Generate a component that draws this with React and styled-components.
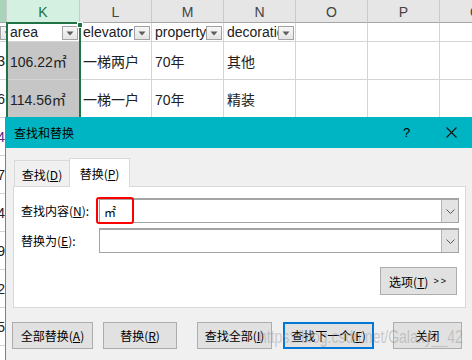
import React from "react";
import styled, { createGlobalStyle } from "styled-components";

const GlobalStyle = createGlobalStyle`
  html, body { margin: 0; padding: 0; background: #fff; }
  body { width: 472px; height: 360px; overflow: hidden; }
  * { box-sizing: border-box; }
`;

const Page = styled.div`
  position: relative;
  width: 472px;
  height: 360px;
  overflow: hidden;
  background: #fff;
  font-family: "Liberation Sans", "Noto Sans CJK SC", sans-serif;
`;

/* ---------------- spreadsheet ---------------- */
const Sheet = styled.div`
  position: relative;
  display: grid;
  grid-template-columns: 7px 73px 72px 72px 72px 72px 72px 72px;
  grid-template-rows: 23px 19px repeat(9, 38px);
  width: 512px;
`;

const HeadCell = styled.div`
  display: flex;
  align-items: center;
  justify-content: center;
  background: ${(p) => (p.$sel ? "#d3f0e0" : p.$partial ? "#a8d5b9" : "#e6e6e6")};
  color: ${(p) => (p.$sel ? "#217346" : "#444")};
  border-right: 1px solid #cacaca;
  border-bottom: 1px solid #a6a6a6;
  font-size: 14px;
  padding-top: 1px;
  overflow: hidden;
`;

const Cell = styled.div`
  position: relative;
  display: flex;
  align-items: ${(p) => (p.$top ? "flex-end" : "center")};
  justify-content: ${(p) => (p.$right ? "flex-end" : "flex-start")};
  padding: ${(p) => (p.$right ? "0 1px 0 0" : "0 0 0 3px")};
  background: ${(p) => (p.$sel ? "#c6c6c6" : "transparent")};
  border-right: 1px solid #d4d4d4;
  border-bottom: 1px solid #d4d4d4;
  font-size: 14px;
  color: ${(p) => p.$color || "#222"};
  white-space: nowrap;
  overflow: ${(p) => (p.$spill ? "visible" : "hidden")};
  padding-bottom: ${(p) => (p.$top ? "1px" : "0")};
`;

const FilterBtn = styled.div`
  position: absolute;
  right: ${(p) => p.$r ?? 1}px;
  bottom: 1px;
  width: 16px;
  height: 14px;
  background: linear-gradient(#f7f7f7, #e4e4e4);
  border: 1px solid #a3a3a3;
  display: flex;
  align-items: center;
  justify-content: center;
`;

const Selection = styled.div`
  position: absolute;
  left: 6px;
  top: 22px;
  width: 75px;
  height: 400px;
  border: 2px solid #217346;
  border-bottom: none;
  pointer-events: none;
`;

const Handle = styled.div`
  position: absolute;
  right: -4px;
  top: -2px;
  width: 6px;
  height: 6px;
  background: #217346;
  border: 1px solid #fff;
`;

const Tri = () => (
  <svg width="8" height="5" viewBox="0 0 8 5">
    <path d="M0.5 0.5 L7.5 0.5 L4 4.5 Z" fill="#5c5c5c" />
  </svg>
);

/* ---------------- dialog ---------------- */
const Dialog = styled.div`
  position: absolute;
  left: 5px;
  top: 117px;
  width: 469px;
  height: 260px;
  background: #f0f0f0;
  border-left: 1px solid #00b4c2;
  font-family: "Noto Sans CJK SC", "Liberation Sans", sans-serif;
  font-size: 12px;
  color: #000;
  display: flex;
  flex-direction: column;
`;

const TitleBar = styled.div`
  height: 31px;
  flex: none;
  background: #00b5c3;
  display: flex;
  align-items: center;
  padding-left: 8px;
`;

const Title = styled.div`
  flex: 1;
  font-size: 12px;
  color: #000;
`;

const TitleBtn = styled.div`
  width: ${(p) => p.$w}px;
  height: 31px;
  display: flex;
  align-items: center;
  justify-content: center;
  font-family: "Liberation Sans", sans-serif;
  font-size: 13px;
  color: #000;
`;

const Body = styled.div`
  padding: 10px 0 0 6px;
  display: flex;
  flex-direction: column;
`;

const TabRow = styled.div`
  display: flex;
  align-items: flex-end;
  height: 29px;
  margin: 0 0 -1px 2px;
  position: relative;
  z-index: 1;
`;

const Tab = styled.div`
  width: ${(p) => p.$w}px;
  height: ${(p) => (p.$active ? 29 : 27)}px;
  margin-left: ${(p) => (p.$active ? -1 : 0)}px;
  background: ${(p) => (p.$active ? "#fff" : "#f0f0f0")};
  border: 1px solid #d9d9d9;
  border-bottom: ${(p) => (p.$active ? "none" : "1px solid #d9d9d9")};
  display: flex;
  align-items: center;
  justify-content: center;
  padding-top: ${(p) => (p.$active ? 0 : 1)}px;
  font-size: 12px;
  white-space: nowrap;
`;

const Panel = styled.div`
  margin-left: 1px;
  width: 453px;
  height: 122px;
  background: #fff;
  border: 1px solid #d9d9d9;
  padding: 11px 0 0 7px;
  display: flex;
  flex-direction: column;
`;

const FieldRow = styled.div`
  display: flex;
  align-items: center;
  height: 25px;
  margin-top: ${(p) => p.$mt || 0}px;
`;

const Label = styled.div`
  width: 78px;
  font-size: 12px;
  white-space: nowrap;
`;

const Combo = styled.div`
  position: relative;
  width: 360px;
  height: 25px;
  border: 1px solid #a3a3a3;
  border-top-width: 2px;
  background: #fff;
  display: flex;
  align-items: center;
`;

const ComboText = styled.div`
  flex: 1;
  padding-left: 4px;
  font-size: 12px;
`;

const ComboArrow = styled.div`
  width: 17px;
  height: 100%;
  background: #e3e3e3;
  border-left: 1px solid #b4b4b4;
  display: flex;
  align-items: center;
  justify-content: center;
`;

const Highlight = styled.div`
  position: absolute;
  left: -4px;
  top: -3px;
  width: 38px;
  height: 27px;
  border: 2px solid #ff0000;
  border-radius: 3px;
  pointer-events: none;
`;

const OptionsRow = styled.div`
  display: flex;
  justify-content: flex-end;
  padding-right: 8px;
  margin-top: 14px;
`;

const Button = styled.div`
  width: ${(p) => p.$w}px;
  height: ${(p) => p.$h || 27}px;
  margin-left: ${(p) => p.$ml || 0}px;
  background: #e1e1e1;
  border: ${(p) => (p.$default ? "2px solid #0078d7" : "1px solid #adadad")};
  display: flex;
  align-items: center;
  justify-content: center;
  font-size: 12px;
  white-space: nowrap;
`;

const Arrows = styled.span`
  font-family: "Liberation Sans", sans-serif;
  font-size: 9px;
  margin-left: 5px;
  letter-spacing: 2px;
`;

const ButtonRow = styled.div`
  display: flex;
  margin-top: 14px;
`;

const Watermark = styled.div`
  position: absolute;
  left: 259px;
  top: 327px;
  font-family: "Liberation Sans", sans-serif;
  font-size: 14px;
  line-height: 20px;
  transform: scaleY(1.25);
  transform-origin: left center;
  color: rgba(140, 140, 140, 0.4);
  white-space: nowrap;
  pointer-events: none;
`;

const Chevron = () => (
  <svg width="9" height="5" viewBox="0 0 9 5">
    <path d="M0.5 0.5 L4.5 4.5 L8.5 0.5" fill="none" stroke="#555" strokeWidth="1" />
  </svg>
);

const CloseIcon = () => (
  <svg width="11" height="11" viewBox="0 0 11 11">
    <path d="M0.5 0.5 L10.5 10.5 M10.5 0.5 L0.5 10.5" stroke="#111" strokeWidth="1.1" />
  </svg>
);

const cols = ["K", "L", "M", "N", "O", "P", "Q"];
const dataRows = [
  ["3", "106.22㎡", "一梯两户", "70年", "其他"],
  ["6", "114.56㎡", "一梯一户", "70年", "精装"],
  ["4"], ["7"], ["4"], ["9"], ["2"], ["5"], ["1"],
];

export default function App() {
  return (
    <Page>
      <GlobalStyle />
      <Sheet>
        <HeadCell $partial />
        {cols.map((c) => (
          <HeadCell key={c} $sel={c === "K"}>{c}</HeadCell>
        ))}

        <Cell $top><FilterBtn $r={-10}><Tri /></FilterBtn></Cell>
        <Cell $top>area<FilterBtn><Tri /></FilterBtn></Cell>
        <Cell $top>elevator<FilterBtn><Tri /></FilterBtn></Cell>
        <Cell $top>property<FilterBtn><Tri /></FilterBtn></Cell>
        <Cell $top $spill>decoration<FilterBtn><Tri /></FilterBtn></Cell>
        <Cell $top />
        <Cell $top />
        <Cell $top />

        {dataRows.map((r, i) => (
          <React.Fragment key={i}>
            <Cell $right $color={i === 2 ? "#5b2a86" : "#222"}>{r[0]}</Cell>
            <Cell $sel>{r[1] || ""}</Cell>
            <Cell>{r[2] || ""}</Cell>
            <Cell>{r[3] || ""}</Cell>
            <Cell>{r[4] || ""}</Cell>
            <Cell />
            <Cell />
            <Cell />
          </React.Fragment>
        ))}

        <Selection><Handle /></Selection>
      </Sheet>

      <Dialog>
        <TitleBar>
          <Title>查找和替换</Title>
          <TitleBtn $w={43}>?</TitleBtn>
          <TitleBtn $w={46}><CloseIcon /></TitleBtn>
        </TitleBar>
        <Body>
          <TabRow>
            <Tab $w={56}>查找(<u>D</u>)</Tab>
            <Tab $w={61} $active>替换(<u>P</u>)</Tab>
          </TabRow>
          <Panel>
            <FieldRow>
              <Label>查找内容(<u>N</u>):</Label>
              <Combo>
                <ComboText>㎡</ComboText>
                <ComboArrow><Chevron /></ComboArrow>
                <Highlight />
              </Combo>
            </FieldRow>
            <FieldRow $mt={5}>
              <Label>替换为(<u>E</u>):</Label>
              <Combo>
                <ComboText />
                <ComboArrow><Chevron /></ComboArrow>
              </Combo>
            </FieldRow>
            <OptionsRow>
              <Button $w={77} $h={28}>选项(<u>T</u>)<Arrows>&gt;&gt;</Arrows></Button>
            </OptionsRow>
          </Panel>
          <ButtonRow>
            <Button $w={81}>全部替换(<u>A</u>)</Button>
            <Button $w={74} $ml={10}>替换(<u>R</u>)</Button>
            <Button $w={75} $ml={20}>查找全部(<u>I</u>)</Button>
            <Button $w={91} $ml={11} $default>查找下一个(<u>F</u>)</Button>
            <Button $w={69} $ml={19}>关闭</Button>
          </ButtonRow>
        </Body>
      </Dialog>

      <Watermark>https://blog.csdn.net/Galaxy__42</Watermark>
    </Page>
  );
}
